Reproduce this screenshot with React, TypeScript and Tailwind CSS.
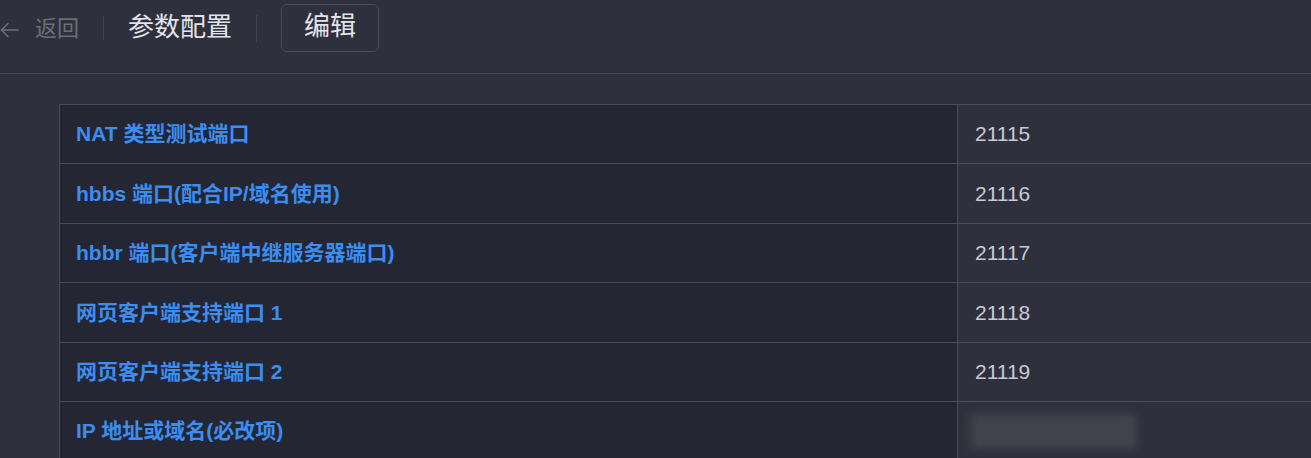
type Row = {
  label: string;
  value?: string;
  hidden?: boolean;
};

const rows: Row[] = [
  { label: "NAT 类型测试端口", value: "21115" },
  { label: "hbbs 端口(配合IP/域名使用)", value: "21116" },
  { label: "hbbr 端口(客户端中继服务器端口)", value: "21117" },
  { label: "网页客户端支持端口 1", value: "21118" },
  { label: "网页客户端支持端口 2", value: "21119" },
  { label: "IP 地址或域名(必改项)", hidden: true },
];

const font = "font-['Liberation_Sans','Noto_Sans_CJK_SC',sans-serif]";

function BackArrow() {
  return (
    <svg
      width="19"
      height="16"
      viewBox="0 0 19 16"
      fill="none"
      stroke="currentColor"
      strokeWidth="1.6"
      strokeLinecap="round"
      strokeLinejoin="round"
      className="mt-[3px]"
    >
      <path d="M18 8H1.5" />
      <path d="M8 1.5L1.5 8L8 14.5" />
    </svg>
  );
}

function Header() {
  return (
    <div className="flex h-[74px] items-start border-b border-[#454654]">
      <div className="flex h-[56px] items-center">
        <button
          type="button"
          className="flex items-center gap-[16px] text-[22px] text-[#6c6e79]"
        >
          <BackArrow />
          <span>返回</span>
        </button>
        <span className="mx-[24px] h-[24px] w-px bg-[#43444f]" />
        <h1 className="-mt-[3px] text-[26px] leading-none text-[#e3e4ea]">参数配置</h1>
        <span className="mx-[24px] h-[27px] w-px bg-[#43444f]" />
        <button
          type="button"
          className="flex h-[48px] w-[98px] items-center justify-center rounded-[6px] border border-[#4a4b58] pb-[4px] text-[26px] leading-none text-[#e3e4ea]"
        >
          编辑
        </button>
      </div>
    </div>
  );
}

function ConfigTable() {
  return (
    <div className="ml-[59px] mt-[30px] w-[1400px] border-l border-[#4b4c58]">
      {rows.map((row) => (
        <div
          key={row.label}
          className="grid h-[59.4px] grid-cols-[898px_1fr] border-t border-[#4b4c58]"
        >
          <div className="flex items-center border-r border-[#4b4c58] bg-[#252633] pl-[16px] text-[21px] font-bold text-[#3b8ef0]">
            {row.label}
          </div>
          <div className="flex items-center pl-[17px] text-[21px] text-[#c9cad3]">
            {row.hidden ? (
              <span className="ml-[-5px] h-[35px] w-[167px] rounded-[4px] bg-[#41434e] blur-[4px]" />
            ) : (
              row.value
            )}
          </div>
        </div>
      ))}
    </div>
  );
}

export default function App() {
  return (
    <div className={`h-[458px] w-full overflow-hidden bg-[#2f303d] ${font}`}>
      <Header />
      <ConfigTable />
    </div>
  );
}
